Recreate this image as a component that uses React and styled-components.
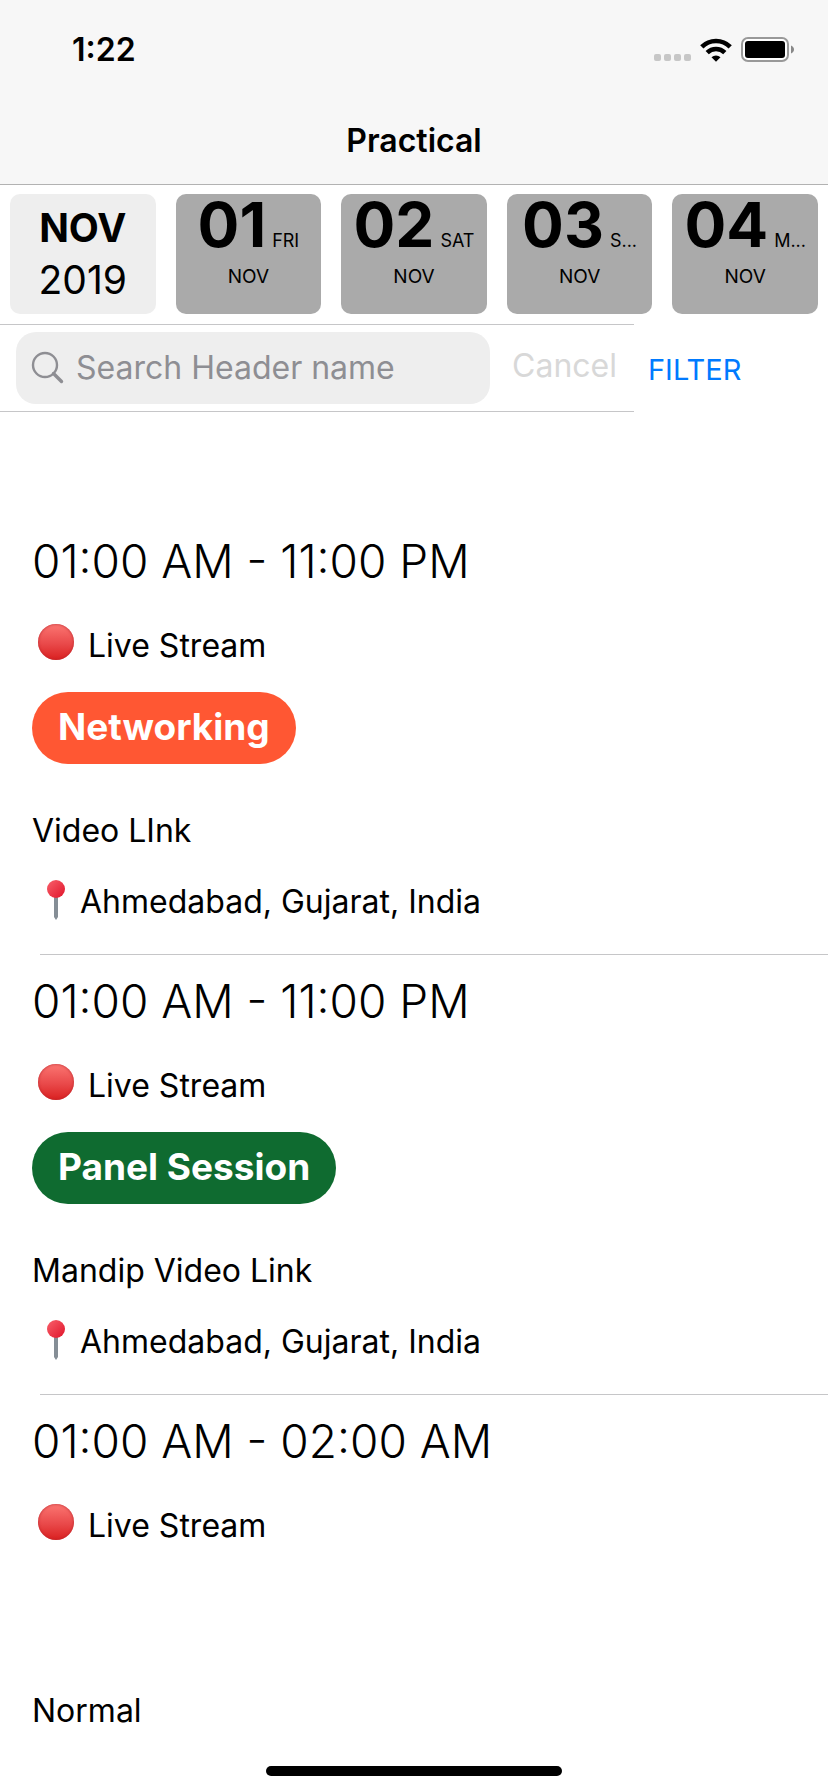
import React from "react";
import styled, { createGlobalStyle } from "styled-components";

const GlobalStyle = createGlobalStyle`
  *, *::before, *::after { box-sizing: border-box; }
  body {
    margin: 0;
    background: #fff;
    color: #000;
    font-family: Inter, "Liberation Sans", sans-serif;
    font-size: 32px;
    line-height: 40px;
  }
  h1, h2, h3, p, ul { margin: 0; padding: 0; font-weight: 400; font-size: inherit; }
  button, input { font: inherit; border: 0; margin: 0; padding: 0; background: none; }
`;

const Screen = styled.div`
  display: flex;
  flex-direction: column;
  height: 100vh;
  overflow: hidden;
`;

const Header = styled.header`
  flex: none;
  background: #f7f7f7;
  border-bottom: 1px solid #b2b2b2;
`;

const StatusBar = styled.div`
  display: flex;
  align-items: center;
  justify-content: space-between;
  height: 100px;
  padding: 0 34px 0 72px;
`;

const Clock = styled.time`
  font-weight: 600;
`;

const StatusIcons = styled.div`
  display: flex;
  align-items: center;
  gap: 9px;
`;

const SignalDots = styled.div`
  display: flex;
  gap: 3px;
  align-self: flex-end;
  padding-bottom: 2px;
`;

const Dot = styled.span`
  width: 7px;
  height: 7px;
  border-radius: 2px;
  background: #c7c7c7;
`;

const Title = styled.h1`
  height: 84px;
  text-align: center;
  line-height: 82px;
  && { font-weight: 600; }
`;

const DateStrip = styled.nav`
  flex: none;
  display: grid;
  grid-template-columns: repeat(5, 1fr);
  gap: 20px;
  padding: 9px 10px 10px;
`;

const MonthCard = styled.div`
  display: flex;
  flex-direction: column;
  align-items: center;
  height: 120px;
  padding-top: 8px;
  border-radius: 10px;
  background: #eee;
  font-size: 39px;
  line-height: 52px;
`;

const Month = styled.strong`
  font-weight: 700;
`;

const DayCard = styled.button`
  display: flex;
  flex-direction: column;
  align-items: center;
  height: 120px;
  border-radius: 10px;
  background: #aaa;
  color: #000;
  white-space: nowrap;
  font-size: 19px;
  line-height: 38px;
`;

const DayLine = styled.span`
  display: flex;
  align-items: baseline;
  gap: 6px;
  height: 64px;
  line-height: 62px;
  font-size: 18px;
`;

const DayNumber = styled.span`
  font-size: 62px;
  font-weight: 700;
`;

const Tools = styled.div`
  flex: none;
  display: flex;
  height: 88px;
`;

const SearchBar = styled.form`
  flex: 1;
  min-width: 0;
  display: flex;
  align-items: center;
  gap: 22px;
  padding: 0 17px 0 16px;
  border-top: 1px solid #c6c6c8;
  border-bottom: 1px solid #c6c6c8;
`;

const SearchField = styled.label`
  flex: 1;
  min-width: 0;
  display: flex;
  align-items: center;
  gap: 12px;
  height: 72px;
  padding: 0 14px;
  border-radius: 20px;
  background: #eee;
`;

const SearchInput = styled.input`
  flex: 1;
  min-width: 0;
  outline: 0;
  &::placeholder { color: #8e8e93; opacity: 1; }
`;

const CancelButton = styled.button`
  color: #d8d8d8;
  padding-bottom: 4px;
`;

const FilterButton = styled.button`
  flex: none;
  width: 194px;
  padding: 4px 0 0 14px;
  text-align: left;
  font-size: 29px;
  color: #007aff;
`;

const Sessions = styled.ul`
  flex: 1;
  min-height: 0;
  overflow: hidden;
  padding-top: 103px;
  list-style: none;
`;

const Session = styled.li`
  display: flex;
  flex-direction: column;
  align-items: flex-start;
  height: 440px;
  padding: 20px 32px 0;
  &:not(:last-child) {
    background: linear-gradient(#c6c6c8, #c6c6c8) 40px 100% / 100% 1px no-repeat;
  }
`;

const Hours = styled.h2`
  && { font-size: 46px; font-weight: 300; }
  line-height: 52px;
`;

const LiveRow = styled.p`
  display: flex;
  align-items: center;
  gap: 14px;
  height: 56px;
  margin-top: 29px;
  padding: 4px 0 0 6px;
`;

const LiveDot = styled.span`
  width: 36px;
  height: 36px;
  margin-bottom: 8px;
  border-radius: 50%;
  background: linear-gradient(#fb7672, #e9494a 55%, #da2020);
  box-shadow: inset 0 0 3px #b8242a;
`;

const TagSlot = styled.div`
  height: 72px;
  margin-top: 20px;
`;

const Tag = styled.span`
  display: block;
  height: 72px;
  padding: 0 26px;
  border-radius: 36px;
  background: ${(p) => p.$color};
  color: #fff;
  font-size: 37px;
  font-weight: 700;
  line-height: 70px;
`;

const SessionTitle = styled.h3`
  margin-top: 47px;
`;

const Place = styled.p`
  display: flex;
  align-items: center;
  gap: 14px;
  margin-top: 28px;
  padding-left: 14px;
`;

const PinSvg = styled.svg`
  flex: none;
  margin-bottom: 4px;
`;

const HomeIndicator = styled.div`
  position: fixed;
  bottom: 16px;
  left: 50%;
  width: 296px;
  height: 10px;
  margin-left: -148px;
  border-radius: 5px;
  background: #000;
`;

const WifiIcon = () => (
  <svg width="32" height="24" viewBox="0 0 32 24" aria-hidden="true">
    <g fill="none" stroke="#000" strokeWidth="4.6">
      <path d="M1.8 8.8a20.2 20.2 0 0 1 28.4 0" />
      <path d="M7.2 14.6a12.6 12.6 0 0 1 17.6 0" />
    </g>
    <path d="M16 23.8l-4.5-4.6a6.6 6.6 0 0 1 9 0z" />
  </svg>
);

const BatteryIcon = () => (
  <svg width="53" height="26" viewBox="0 0 53 26" aria-hidden="true">
    <rect x="1" y="1" width="46" height="23" rx="6" fill="#fff" stroke="#999" strokeWidth="2" />
    <rect x="4" y="4" width="40" height="17" rx="3" />
    <path d="M50 8.5c4 1.5 4 6.5 0 8z" fill="#888" />
  </svg>
);

const SearchIcon = () => (
  <svg width="34" height="34" viewBox="0 0 34 34" fill="none" stroke="#8e8e93" aria-hidden="true">
    <circle cx="15" cy="14" r="12" strokeWidth="2.4" />
    <path d="M23.5 22.5l8 8" strokeWidth="3.4" strokeLinecap="round" />
  </svg>
);

const PinIcon = () => (
  <PinSvg width="20" height="42" viewBox="0 0 20 42" aria-hidden="true">
    <defs>
      <linearGradient id="pinHead" x1="0" y1="0" x2="1" y2="1">
        <stop offset="0" stopColor="#f9606b" />
        <stop offset="1" stopColor="#e0142a" />
      </linearGradient>
    </defs>
    <path d="M8 17h4v21l-2 3-2-3z" fill="#858e96" />
    <circle cx="10" cy="10" r="9" fill="url(#pinHead)" />
  </PinSvg>
);

const days = [
  { number: "01", day: "FRI" },
  { number: "02", day: "SAT" },
  { number: "03", day: "S..." },
  { number: "04", day: "M..." },
];

const sessions = [
  {
    hours: "01:00 AM - 11:00 PM",
    tag: "Networking",
    color: "#ff5733",
    title: "Video LInk",
    place: "Ahmedabad, Gujarat, India",
  },
  {
    hours: "01:00 AM - 11:00 PM",
    tag: "Panel Session",
    color: "#0f6b30",
    title: "Mandip Video Link",
    place: "Ahmedabad, Gujarat, India",
  },
  { hours: "01:00 AM - 02:00 AM", title: "Normal" },
];

export default function App() {
  return (
    <Screen>
      <GlobalStyle />
      <Header>
        <StatusBar>
          <Clock>1:22</Clock>
          <StatusIcons>
            <SignalDots>
              <Dot />
              <Dot />
              <Dot />
              <Dot />
            </SignalDots>
            <WifiIcon />
            <BatteryIcon />
          </StatusIcons>
        </StatusBar>
        <Title>Practical</Title>
      </Header>

      <DateStrip aria-label="Dates">
        <MonthCard>
          <Month>NOV</Month>
          <span>2019</span>
        </MonthCard>
        {days.map((d) => (
          <DayCard key={d.number} type="button">
            <DayLine>
              <DayNumber>{d.number}</DayNumber>
              <span>{d.day}</span>
            </DayLine>
            <span>NOV</span>
          </DayCard>
        ))}
      </DateStrip>

      <Tools>
        <SearchBar role="search">
          <SearchField>
            <SearchIcon />
            <SearchInput type="text" aria-label="Search" placeholder="Search Header name" />
          </SearchField>
          <CancelButton type="button">Cancel</CancelButton>
        </SearchBar>
        <FilterButton type="button">FILTER</FilterButton>
      </Tools>

      <Sessions>
        {sessions.map((s) => (
          <Session key={s.title}>
            <Hours>{s.hours}</Hours>
            <LiveRow>
              <LiveDot />
              Live Stream
            </LiveRow>
            <TagSlot>{s.tag && <Tag $color={s.color}>{s.tag}</Tag>}</TagSlot>
            <SessionTitle>{s.title}</SessionTitle>
            {s.place && (
              <Place>
                <PinIcon />
                {s.place}
              </Place>
            )}
          </Session>
        ))}
      </Sessions>
      <HomeIndicator />
    </Screen>
  );
}
